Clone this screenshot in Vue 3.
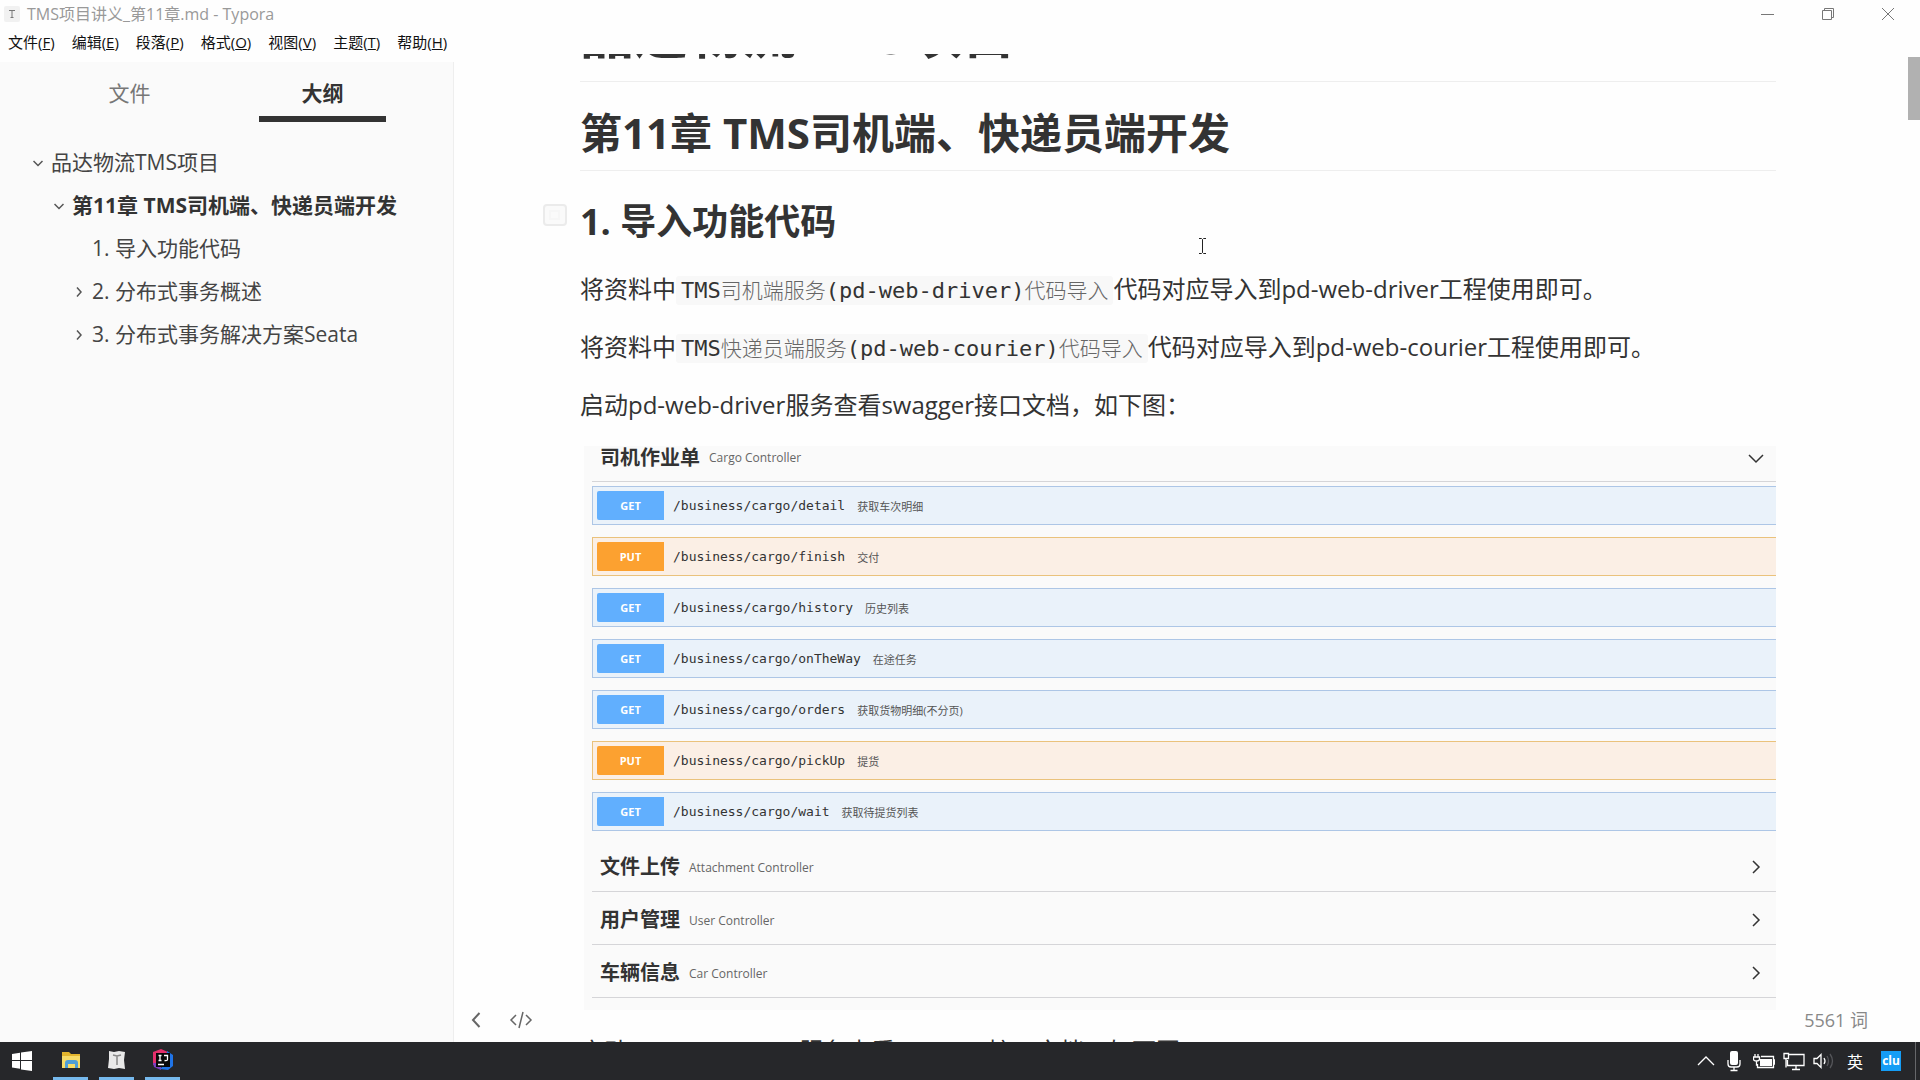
<script setup>
const menus = [
  ['文件', 'F'], ['编辑', 'E'], ['段落', 'P'], ['格式', 'O'],
  ['视图', 'V'], ['主题', 'T'], ['帮助', 'H'],
]

const outline = [
  { text: '品达物流TMS项目', level: 1, arrow: 'down' },
  { text: '第11章 TMS司机端、快递员端开发', level: 2, arrow: 'down', active: true },
  { text: '1. 导入功能代码', level: 3, arrow: '' },
  { text: '2. 分布式事务概述', level: 3, arrow: 'right' },
  { text: '3. 分布式事务解决方案Seata', level: 3, arrow: 'right' },
]

const operations = [
  { method: 'GET', path: '/business/cargo/detail', note: '获取车次明细' },
  { method: 'PUT', path: '/business/cargo/finish', note: '交付' },
  { method: 'GET', path: '/business/cargo/history', note: '历史列表' },
  { method: 'GET', path: '/business/cargo/onTheWay', note: '在途任务' },
  { method: 'GET', path: '/business/cargo/orders', note: '获取货物明细(不分页)' },
  { method: 'PUT', path: '/business/cargo/pickUp', note: '提货' },
  { method: 'GET', path: '/business/cargo/wait', note: '获取待提货列表' },
]

const controllers = [
  ['文件上传', 'Attachment Controller'],
  ['用户管理', 'User Controller'],
  ['车辆信息', 'Car Controller'],
]
</script>

<template>
  <div class="desktop">
    <header class="titlebar">
      <svg class="app-icon" width="16" height="16" viewBox="0 0 16 16" aria-hidden="true">
        <rect width="16" height="16" rx="2" fill="#f1f1f1" />
        <path d="M5 4.5h6M8 4.5v7M6.5 11.5h3" stroke="#777" fill="none" />
      </svg>
      <span class="title">TMS项目讲义_第11章.md - Typora</span>
      <div class="window-controls">
        <button type="button" aria-label="最小化">
          <svg width="14" height="14" viewBox="0 0 14 14"><path d="M0 7.5h13" /></svg>
        </button>
        <button type="button" aria-label="还原">
          <svg width="14" height="14" viewBox="0 0 14 14"><path d="M1.5 3.5h9v9h-9zM3.500 3.500v-2h9v9h-2" /></svg>
        </button>
        <button type="button" aria-label="关闭">
          <svg width="14" height="14" viewBox="0 0 14 14"><path d="M1 1l12 12M13 1L1 13" /></svg>
        </button>
      </div>
    </header>

    <nav class="menubar" aria-label="菜单">
      <button v-for="[name, key] in menus" :key="key" type="button">{{ name }}(<u>{{ key }}</u>)</button>
    </nav>

    <div class="workspace">
      <aside class="sidebar">
        <div class="tabs">
          <button type="button" class="tab">文件</button>
          <button type="button" class="tab current">大纲</button>
        </div>
        <ul class="outline">
          <li v-for="item in outline" :key="item.text" :class="['level-' + item.level, { active: item.active }]">
            <svg class="arrow" width="10" height="10" viewBox="0 0 10 10" aria-hidden="true">
              <path v-if="item.arrow === 'down'" d="M.5 3l4.500 4.500L9.500 3" />
              <path v-if="item.arrow === 'right'" d="M3 .5L7 5 3 9.500" />
            </svg>
            <a href="#">{{ item.text }}</a>
          </li>
        </ul>
      </aside>

      <main class="editor">
        <div class="scroller">
          <article class="write">
            <h1>品达物流TMS项目</h1>
            <h2>第11章 TMS司机端、快递员端开发</h2>
            <h3>
              <svg class="fold" width="26" height="24" viewBox="0 0 26 24" aria-hidden="true">
                <rect x="2" y="2" width="22" height="20" rx="3" fill="#fafafa" stroke="#ebebeb" stroke-width="2" />
                <path d="M8 8h9v8H8z" fill="none" stroke="#f6f6f6" stroke-width="2" />
              </svg>1. 导入功能代码
            </h3>
            <p>将资料中<code>TMS<i>司机端服务</i>(pd-web-driver)<i>代码导入</i></code>代码对应导入到pd-web-driver工程使用即可。</p>
            <p>将资料中<code>TMS<i>快递员端服务</i>(pd-web-courier)<i>代码导入</i></code>代码对应导入到pd-web-courier工程使用即可。</p>
            <p>启动pd-web-driver服务查看swagger接口文档，如下图：</p>

            <section class="swagger">
              <button type="button" class="group open">
                <b>司机作业单</b><span>Cargo Controller</span>
                <svg width="16" height="16" viewBox="0 0 16 16" aria-hidden="true"><path d="M1 5l7 7 7-7" /></svg>
              </button>
              <ul class="operations">
                <li v-for="op in operations" :key="op.path" :class="op.method.toLowerCase()">
                  <span class="method">{{ op.method }}</span>
                  <span class="path">{{ op.path }}</span>
                  <span class="note">{{ op.note }}</span>
                </li>
              </ul>
              <button v-for="[name, label] in controllers" :key="label" type="button" class="group">
                <b>{{ name }}</b><span>{{ label }}</span>
                <svg width="16" height="16" viewBox="0 0 16 16" aria-hidden="true"><path d="M5 2l6 6-6 6" /></svg>
              </button>
            </section>

            <p>启动pd-web-courier服务查看swagger接口文档，如下图：</p>
          </article>
          <div class="rail"><div class="thumb"></div></div>
        </div>

        <div class="footer-tools">
          <button type="button" aria-label="收起侧边栏">
            <svg width="12" height="18" viewBox="0 0 12 18"><path d="M9.500 2L3 9l6.500 7" stroke-width="2" /></svg>
          </button>
          <button type="button" aria-label="源代码模式">
            <svg width="24" height="18" viewBox="0 0 24 18"><path d="M7 4L2 9l5 5M17 4l5 5-5 5M14 1l-4 16" stroke-width="1.500" /></svg>
          </button>
        </div>
        <button type="button" class="word-count">5561 词</button>
        <svg class="caret" width="9" height="18" viewBox="0 0 9 18" aria-hidden="true">
          <path d="M1 1.500h2.500l1 1 1-1H8M4.500 2.500v13M1 16.500h2.500l1-1 1 1H8" />
        </svg>
      </main>
    </div>

    <footer class="taskbar">
      <button type="button" class="start" aria-label="开始">
        <svg width="22" height="22" viewBox="0 0 22 22">
          <path fill="#fff" d="M1 4l8-1.300V10H1zM10 2.500L21 1v9H10zM1 11h8v7.800L1 17.600zM10 11h11v10l-11-1.600z" />
        </svg>
      </button>
      <button type="button" class="app" aria-label="文件资源管理器">
        <svg width="20" height="20" viewBox="0 0 20 20">
          <path fill="#e3b52d" d="M1 2h7l2 2h9v4H1z" />
          <path fill="#f7dc68" d="M1 6h18v12H1z" />
          <path fill="#4f9fd8" d="M4 18v-5q0-3 3-3h7q3 0 3 3v5h-3v-4H7v4z" />
        </svg>
      </button>
      <button type="button" class="app" aria-label="Typora">
        <svg width="20" height="20" viewBox="0 0 20 20">
          <path fill="#e9e9e9" d="M2 1l5 1 5-1 6 1-1 8 1 9-6-1-5 1-6-1 1-9z" />
          <path d="M6 5l4 1 4-1M10 6v9" stroke="#888" stroke-width="1.500" fill="none" />
        </svg>
      </button>
      <button type="button" class="app" aria-label="IntelliJ IDEA">
        <svg width="22" height="22" viewBox="0 0 22 22">
          <path fill="#e5306c" d="M1 3l8-3 7 3-7 12-8 1z" />
          <path fill="#7a3fc0" d="M1 14h8v7l-7-3z" />
          <path fill="#1f74e8" d="M15 2l6 4v11l-5 4-8-1 6-6z" />
          <rect x="4" y="4" width="14" height="14" fill="#090909" />
          <path d="M6.500 6.500h3M8 6.500v5M6.500 11.500h3M12 6.500h3.500v4q0 1.500-3 1M6 15.500h6" stroke="#fff" stroke-width="1.300" fill="none" />
        </svg>
      </button>

      <div class="tray">
        <button type="button" aria-label="显示隐藏的图标">
          <svg width="18" height="22" viewBox="0 0 18 22"><path d="M1 15l8-8 8 8" /></svg>
        </button>
        <button type="button" class="mic" aria-label="麦克风">
          <svg width="14" height="22" viewBox="0 0 14 22">
            <rect x="3" y="1" width="8" height="14" rx="2" fill="#fff" stroke="none" />
            <path d="M1 10v4q0 3 3 3h6q3 0 3-3v-4M7 17v3.500M3.500 20.500h7" />
          </svg>
        </button>
        <button type="button" aria-label="电池">
          <svg width="22" height="22" viewBox="0 0 22 22">
            <rect x="7" y="9" width="12" height="7" fill="#fff" stroke="none" />
            <path d="M8 6.500h12.500v11H4.500V14M20.500 10h1v4h-1M2 4v3M5 4v3M.5 7h6v2q0 2-3 2t-3-2zM3.500 11v4h1" />
          </svg>
        </button>
        <button type="button" aria-label="网络">
          <svg width="22" height="22" viewBox="0 0 22 22"><path d="M6 4.500h15v11H4.500V10M1 3.500h4.500v5H1zM3 8.500v9M13 15.500v4M9 19.500h8" /></svg>
        </button>
        <button type="button" aria-label="音量">
          <svg width="22" height="22" viewBox="0 0 22 22">
            <path d="M1 8.500h3l4-4v13l-4-4H1zM11 8q2 3 0 6" />
            <path class="faint" d="M14 6q3 5 0 10M17 4q5 7 0 14" />
          </svg>
        </button>
        <button type="button" class="ime">英</button>
        <button type="button" class="badge">clu</button>
      </div>
    </footer>
  </div>
</template>

<style>
body {
  margin: 0;
}
</style>

<style scoped>
.desktop {
  display: flex;
  flex-direction: column;
  height: 100vh;
  overflow: hidden;
  background: #fefefe;
  color: #333;
  font-family: "Open Sans", "Noto Sans CJK SC", sans-serif;
}

button {
  padding: 0;
  border: 0;
  background: none;
  color: inherit;
  font: inherit;
  text-align: left;
}

svg {
  display: block;
  flex: none;
}

ul {
  margin: 0;
  padding: 0;
  list-style: none;
}

/* window frame */
.titlebar {
  display: flex;
  flex: none;
  align-items: center;
  height: 28px;
  padding: 0 25px 0 4px;
  color: #999;
  font-size: 16px;
  line-height: 24px;
}

.title {
  margin-left: 7px;
}

.window-controls {
  display: flex;
  gap: 46px;
  margin-left: auto;
}

.window-controls path {
  fill: none;
  stroke: #777;
}

.menubar {
  display: flex;
  flex: none;
  gap: 17px;
  height: 26px;
  padding-left: 8px;
  color: #111;
  font-size: 15px;
  line-height: 28px;
}

.workspace {
  display: flex;
  flex: 1;
  min-height: 0;
}

/* sidebar */
.sidebar {
  box-sizing: border-box;
  flex: none;
  width: 454px;
  margin-top: 8px;
  border-right: 1px solid #eee;
  background: #fafafa;
  font-size: 21px;
}

.tabs {
  display: flex;
  padding: 0 34px 0 33px;
}

.tab {
  flex: 1;
  margin: 0 33px;
  padding: 9px 0 1px;
  border-bottom: 6px solid transparent;
  color: #777;
  line-height: 44px;
  text-align: center;
}

.tab.current {
  border-color: #333;
  color: #333;
  font-weight: 700;
}

.outline {
  margin-top: 19px;
}

.outline li {
  display: flex;
  align-items: center;
  gap: 8px;
  line-height: 43px;
  white-space: nowrap;
}

.outline a {
  color: #444;
  text-decoration: none;
}

.outline .active a {
  color: #333;
  font-weight: 700;
}

.level-1 { padding-left: 33px; }
.level-2 { padding-left: 54px; }
.level-3 { padding-left: 74px; }

.arrow path {
  fill: none;
  stroke: #555;
  stroke-width: 1.5;
}

/* document */
.editor {
  position: relative;
  flex: 1;
  min-width: 0;
}

.scroller {
  display: flex;
  height: 100%;
  overflow: hidden;
}

.write {
  width: 100%;
  max-width: 1196px;
  margin: -53px auto 0;
  font-size: 24px;
}

.rail {
  display: flex;
  flex: none;
  justify-content: flex-end;
  width: 18px;
}

.thumb {
  width: 12px;
  height: 63px;
  margin-top: 3px;
  background: #b1b1b1;
}

h1,
h2 {
  margin: 0 0 25px;
  border-bottom: 1px solid #eee;
  white-space: nowrap;
}

h1 {
  padding-bottom: 15px;
  font-size: 54px;
  line-height: 65px;
}

h2 {
  padding-bottom: 12px;
  font-size: 42px;
  line-height: 51px;
}

h3 {
  position: relative;
  margin: 0 0 23px;
  font-size: 36px;
  line-height: 51px;
}

.fold {
  position: absolute;
  top: 7px;
  left: -38px;
}

p {
  margin: 0 0 20px;
  line-height: 38px;
  white-space: nowrap;
}

code {
  padding: 2px 5px;
  border-radius: 3px;
  background: #f8f8f8;
  font-family: "DejaVu Sans Mono", "Noto Sans CJK SC", monospace;
  font-size: 22px;
  line-height: 24px;
}

code i {
  color: #666;
  font-size: 21px;
  font-style: normal;
  font-weight: 300;
}

/* api listing */
.swagger {
  margin: 22px 0 22px 4px;
  padding: 0 0 12px 8px;
  background: #fafafa;
}

.group {
  box-sizing: border-box;
  display: flex;
  align-items: center;
  gap: 9px;
  width: 100%;
  height: 53px;
  padding: 4px 12px 0 8px;
  border-bottom: 1px solid #d5d5d8;
  font-size: 12px;
}

.group.open {
  height: 36px;
  padding-bottom: 16px;
}

.group b {
  font-size: 20px;
  line-height: 24px;
}

.group span {
  color: #666;
}

.group svg {
  margin-left: auto;
}

.group path {
  fill: none;
  stroke: #333;
  stroke-width: 1.5;
}

.operations {
  display: flex;
  flex-direction: column;
  gap: 12px;
  margin: 4px 0 8px;
}

.operations li {
  box-sizing: border-box;
  display: flex;
  align-items: center;
  height: 39px;
  padding-left: 4px;
  border: 1px solid #adc6e6;
  border-right: 0;
  background: #eaf2fa;
}

.operations .put {
  border-color: #eac27c;
  background: #fbefe5;
}

.method {
  width: 67px;
  border-radius: 2px 0 0 2px;
  background: #61affe;
  color: #fff;
  font-size: 11px;
  font-weight: 700;
  line-height: 29px;
  text-align: center;
}

.put .method {
  background: #fca130;
}

.path {
  margin: 0 12px 0 9px;
  font-family: "DejaVu Sans Mono", monospace;
  font-size: 13px;
}

.note {
  color: #555;
  font-size: 11px;
}

/* overlays */
.footer-tools {
  position: absolute;
  bottom: 13px;
  left: 16px;
  display: flex;
  gap: 27px;
}

.footer-tools path {
  fill: none;
  stroke: #666;
}

.word-count {
  position: absolute;
  right: 52px;
  bottom: 10px;
  color: #888;
  font-size: 18px;
  line-height: 24px;
}

.caret {
  position: absolute;
  top: 183px;
  left: 744px;
  fill: none;
  stroke: #222;
}

/* taskbar */
.taskbar {
  display: flex;
  flex: none;
  height: 38px;
  background: #26272a;
}

.start,
.app {
  display: flex;
  align-items: center;
  justify-content: center;
}

.start {
  width: 44px;
  margin-right: 9px;
}

.app {
  width: 35px;
  margin-right: 11px;
  border-bottom: 3px solid #76b9ed;
}

.tray {
  display: flex;
  align-items: center;
  gap: 8px;
  margin: 0 4px 0 auto;
  padding-right: 14px;
  border-right: 1px solid #66676a;
  color: #fff;
}

.tray path {
  fill: none;
  stroke: #fff;
  stroke-width: 1.3;
}

.tray .faint {
  stroke: #55565a;
}

.mic {
  margin: 0 4px;
}

.ime {
  margin: 0 10px 0 4px;
  font-size: 16px;
}

.badge {
  width: 20px;
  background: #159df5;
  font-size: 12px;
  font-weight: 700;
  line-height: 20px;
  text-align: center;
}
</style>
